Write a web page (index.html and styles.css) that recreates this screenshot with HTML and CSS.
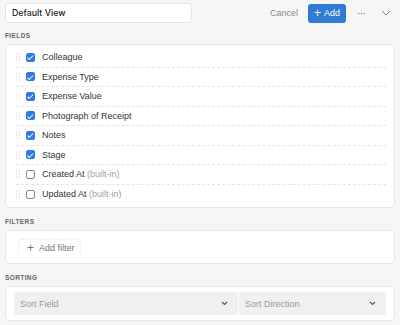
FILE: index.html
```html
<!DOCTYPE html>
<html>
<head>
<meta charset="utf-8">
<link rel="stylesheet" href="styles.css">
</head>
<body>
<div class="page">
  <div class="topbar">
    <div class="name-input">Default View</div>
    <div class="actions">
      <span class="cancel">Cancel</span>
      <button class="add-btn"><span class="plus">+</span> Add</button>
      <svg class="more" width="7" height="3" viewBox="0 0 7 3"><circle cx="0.7" cy="1.5" r="0.65" fill="#777"/><circle cx="3.5" cy="1.5" r="0.65" fill="#777"/><circle cx="6.3" cy="1.5" r="0.65" fill="#777"/></svg>
      <svg class="chev-top" width="10" height="6" viewBox="0 0 10 6"><path d="M1 1l4 4 4-4" fill="none" stroke="#888" stroke-width="1"/></svg>
    </div>
  </div>

  <div class="section-label">FIELDS</div>
  <div class="card fields">
    <div class="row"><svg class="handle" width="4" height="8" viewBox="0 0 4 8"><g fill="#cfcfcf"><rect x="0" y="0.5" width="1" height="1"/><rect x="3" y="0.5" width="1" height="1"/><rect x="0" y="3.5" width="1" height="1"/><rect x="3" y="3.5" width="1" height="1"/><rect x="0" y="6.5" width="1" height="1"/><rect x="3" y="6.5" width="1" height="1"/></g></svg><span class="cb on"></span><span class="lbl">Colleague</span></div>
    <div class="row"><svg class="handle" width="4" height="8" viewBox="0 0 4 8"><g fill="#cfcfcf"><rect x="0" y="0.5" width="1" height="1"/><rect x="3" y="0.5" width="1" height="1"/><rect x="0" y="3.5" width="1" height="1"/><rect x="3" y="3.5" width="1" height="1"/><rect x="0" y="6.5" width="1" height="1"/><rect x="3" y="6.5" width="1" height="1"/></g></svg><span class="cb on"></span><span class="lbl">Expense Type</span></div>
    <div class="row"><svg class="handle" width="4" height="8" viewBox="0 0 4 8"><g fill="#cfcfcf"><rect x="0" y="0.5" width="1" height="1"/><rect x="3" y="0.5" width="1" height="1"/><rect x="0" y="3.5" width="1" height="1"/><rect x="3" y="3.5" width="1" height="1"/><rect x="0" y="6.5" width="1" height="1"/><rect x="3" y="6.5" width="1" height="1"/></g></svg><span class="cb on"></span><span class="lbl">Expense Value</span></div>
    <div class="row"><svg class="handle" width="4" height="8" viewBox="0 0 4 8"><g fill="#cfcfcf"><rect x="0" y="0.5" width="1" height="1"/><rect x="3" y="0.5" width="1" height="1"/><rect x="0" y="3.5" width="1" height="1"/><rect x="3" y="3.5" width="1" height="1"/><rect x="0" y="6.5" width="1" height="1"/><rect x="3" y="6.5" width="1" height="1"/></g></svg><span class="cb on"></span><span class="lbl">Photograph of Receipt</span></div>
    <div class="row"><svg class="handle" width="4" height="8" viewBox="0 0 4 8"><g fill="#cfcfcf"><rect x="0" y="0.5" width="1" height="1"/><rect x="3" y="0.5" width="1" height="1"/><rect x="0" y="3.5" width="1" height="1"/><rect x="3" y="3.5" width="1" height="1"/><rect x="0" y="6.5" width="1" height="1"/><rect x="3" y="6.5" width="1" height="1"/></g></svg><span class="cb on"></span><span class="lbl">Notes</span></div>
    <div class="row"><svg class="handle" width="4" height="8" viewBox="0 0 4 8"><g fill="#cfcfcf"><rect x="0" y="0.5" width="1" height="1"/><rect x="3" y="0.5" width="1" height="1"/><rect x="0" y="3.5" width="1" height="1"/><rect x="3" y="3.5" width="1" height="1"/><rect x="0" y="6.5" width="1" height="1"/><rect x="3" y="6.5" width="1" height="1"/></g></svg><span class="cb on"></span><span class="lbl">Stage</span></div>
    <div class="row"><svg class="handle" width="4" height="8" viewBox="0 0 4 8"><g fill="#cfcfcf"><rect x="0" y="0.5" width="1" height="1"/><rect x="3" y="0.5" width="1" height="1"/><rect x="0" y="3.5" width="1" height="1"/><rect x="3" y="3.5" width="1" height="1"/><rect x="0" y="6.5" width="1" height="1"/><rect x="3" y="6.5" width="1" height="1"/></g></svg><span class="cb"></span><span class="lbl">Created At <span class="muted">(built-in)</span></span></div>
    <div class="row last"><svg class="handle" width="4" height="8" viewBox="0 0 4 8"><g fill="#cfcfcf"><rect x="0" y="0.5" width="1" height="1"/><rect x="3" y="0.5" width="1" height="1"/><rect x="0" y="3.5" width="1" height="1"/><rect x="3" y="3.5" width="1" height="1"/><rect x="0" y="6.5" width="1" height="1"/><rect x="3" y="6.5" width="1" height="1"/></g></svg><span class="cb"></span><span class="lbl">Updated At <span class="muted">(built-in)</span></span></div>
  </div>

  <div class="section-label">FILTERS</div>
  <div class="card filters">
    <div class="add-filter"><span class="fplus">+</span>Add filter</div>
  </div>

  <div class="section-label">SORTING</div>
  <div class="card sorting">
    <div class="select"><span>Sort Field</span><svg width="7" height="5" viewBox="0 0 7 5"><path d="M1 1l2.5 2.5 2.5-2.5" fill="none" stroke="#555" stroke-width="1.1"/></svg></div>
    <div class="select"><span>Sort Direction</span><svg width="7" height="5" viewBox="0 0 7 5"><path d="M1 1l2.5 2.5 2.5-2.5" fill="none" stroke="#555" stroke-width="1.1"/></svg></div>
  </div>
</div>
</body>
</html>
```
FILE: styles.css
```css
* { box-sizing: border-box; }
html, body { margin: 0; padding: 0; }
body {
  background: #f6f6f6;
  font-family: "Liberation Sans", Arial, sans-serif;
  color: #2b2b2b;
  width: 400px;
  height: 325px;
  overflow: hidden;
}
.page { padding: 3px 5px 0 5px; }
.topbar { display: flex; align-items: center; justify-content: space-between; height: 20px; }
.name-input {
  width: 187px; height: 20px;
  background: #fff;
  border: 1px solid #e4e4e4;
  border-radius: 4px;
  padding: 0 6px;
  font-family: Inter, "Liberation Sans", sans-serif;
  font-size: 8.8px; font-weight: 500;
  line-height: 18px;
  color: #222;
}
.actions { display: flex; align-items: center; height: 20px; }
.cancel { font-size: 9px; color: #8a8a8a; margin-right: 10px; }
.add-btn {
  height: 19px; width: 38px;
  background: #2f7ad3;
  border: none; border-radius: 3px;
  color: #fff;
  font-family: inherit; font-size: 9px;
  padding: 0;
  display: flex; align-items: center; justify-content: center;
}
.plus { font-size: 12px; margin-right: 3px; line-height: 1; }
.more { margin-left: 12px; margin-right: 16px; }
.chev-top { margin-right: 4px; }
.section-label {
  font-size: 6.5px; font-weight: 700; color: #666;
  letter-spacing: 0.4px;
  line-height: 8px;
  height: 8px;
  margin-top: 10px; margin-bottom: 4px;
}
.topbar + .section-label { margin-top: 9px; }
.card {
  background: #fff;
  border: 1px solid #e6e6e6;
  border-radius: 4px;
}
.fields { padding: 3px 8px 3px 10px; }
.row {
  display: flex; align-items: center;
  height: 19.5px;
  border-bottom: 1px dashed #e4e4e4;
}
.row.last { border-bottom: none; }
.handle { margin-right: 6px; flex: none; }
.cb {
  width: 9px; height: 9px;
  border: 1px solid #8a8a8a;
  border-radius: 2px;
  background: #fff;
  margin-right: 7px;
  position: relative;
  flex: none;
}
.cb.on {
  background: #2f7ae5;
  border-color: #2f7ae5;
}
.cb.on::after {
  content: "";
  position: absolute;
  left: 2.2px; top: 0.4px;
  width: 2px; height: 4.5px;
  border: solid #fff;
  border-width: 0 1.2px 1.2px 0;
  transform: rotate(45deg);
}
.lbl { font-size: 9px; color: #333; }
.muted { color: #a0a0a0; }
.filters { height: 34px; padding: 7px 12px; }
.add-filter {
  display: inline-flex; align-items: center;
  height: 19px; padding: 0 5px 0 8px;
  border: 1px dashed #eeeeee;
  border-radius: 3px;
  font-size: 9px; color: #777;
}
.fplus { font-size: 12px; margin-right: 5px; color: #777; line-height: 1; }
.sorting { display: flex; padding: 5px 8px; gap: 1px; height: 35px; }
.select {
  background: #eef0f2;
  height: 23px;
  display: flex; align-items: center; justify-content: space-between;
  padding: 0 10px 0 6px;
  font-size: 9px; color: #9a9a9a;
}
.select:first-child { width: 224px; border-radius: 3px 0 0 3px; }
.select:last-child { flex: 1; border-radius: 0 3px 3px 0; }
```
